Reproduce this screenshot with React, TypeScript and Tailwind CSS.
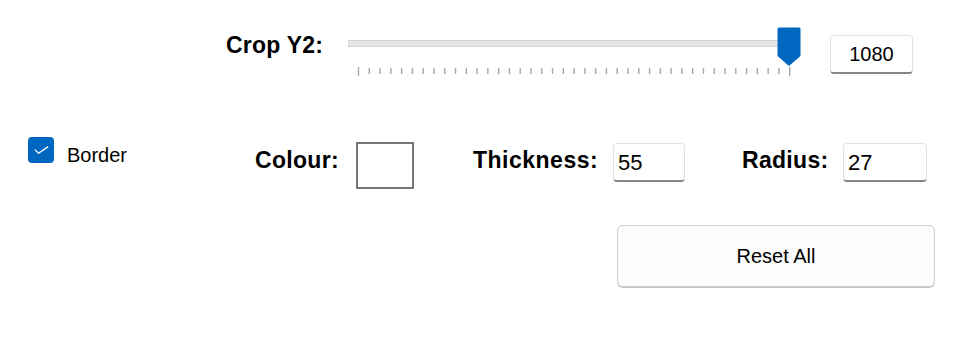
import React from 'react';

const ticks = Array.from({ length: 41 }, (_, i) => i);

function TextBox({ value, width, align }: { value: string; width: string; align: 'left' | 'center' }) {
  return (
    <div
      className={`${width} h-[39px] bg-white border border-[#e2e2e2] border-b-2 border-b-[#868686] rounded-[4px] flex items-center ${
        align === 'center' ? 'justify-center text-[20px]' : 'justify-start pl-[4px] text-[22px]'
      } text-black`}
    >
      {value}
    </div>
  );
}

function Slider() {
  return (
    <div className="relative w-[482px] h-[50px]">
      {/* track */}
      <div className="absolute left-0 top-[13px] w-[446px] h-[7px] bg-[#e6e6e6] border border-[#d4d4d4]" />
      {/* ticks */}
      <svg className="absolute left-0 top-[39px]" width="450" height="12">
        {ticks.map((i) => {
          const x = 10.5 + i * 10.78;
          const tall = i === 0 || i === 40;
          return (
            <line
              key={i}
              x1={x}
              x2={x}
              y1={tall ? 1 : 2}
              y2={tall ? 10 : 8}
              stroke="#a6a6a6"
              strokeWidth="1.4"
            />
          );
        })}
      </svg>
      {/* thumb */}
      <svg className="absolute left-[429px] top-0" width="24" height="40">
        <path d="M2 0.5 H22 Q23.5 0.5 23.5 2 V29 L12 39 L0.5 29 V2 Q0.5 0.5 2 0.5 Z" fill="#0067c0" />
      </svg>
    </div>
  );
}

export default function App() {
  return (
    <div className="w-[956px] h-[350px] bg-white text-black font-['Liberation_Sans',Arial,sans-serif] overflow-hidden">
      {/* crop slider row */}
      <div className="flex items-start pt-[27px] h-[77px]">
        <div className="ml-[226px] w-[122px] mt-[7px] text-[23px] leading-[23px] font-bold tracking-[0.2px]">Crop Y2:</div>
        <Slider />
        <div className="mt-[8px]">
          <TextBox value="1080" width="w-[83px]" align="center" />
        </div>
      </div>

      {/* border row */}
      <div className="flex items-start mt-[60px]">
        <div className="ml-[28px] w-[227px] flex items-start">
          <div className="w-[26px] h-[26px] rounded-[4px] bg-[#0067c0] flex items-center justify-center">
            <svg width="15" height="8" viewBox="0 0 15 8">
              <path d="M0.8 3.6 L4.6 7.2 L14.2 0.6" fill="none" stroke="#ffffff" strokeWidth="1.3" />
            </svg>
          </div>
          <span className="ml-[13px] mt-[8px] text-[20px] leading-[20px]">Border</span>
        </div>
        <div className="w-[101px] mt-[12px] text-[23px] leading-[23px] font-bold tracking-[0.3px]">Colour:</div>
        <div className="mt-[5px] w-[58px] h-[47px] bg-white border-2 border-[#767676]" />
        <div className="ml-[59px] w-[140px] mt-[12px] text-[23px] leading-[23px] font-bold tracking-[0.5px]">Thickness:</div>
        <div className="mt-[6px]">
          <TextBox value="55" width="w-[72px]" align="left" />
        </div>
        <div className="ml-[57px] w-[101px] mt-[12px] text-[23px] leading-[23px] font-bold tracking-[0.3px]">Radius:</div>
        <div className="mt-[6px]">
          <TextBox value="27" width="w-[84px]" align="left" />
        </div>
      </div>

      {/* reset */}
      <div className="flex mt-[36px]">
        <button className="ml-[617px] w-[318px] h-[62px] bg-[#fdfdfd] border border-[#cfcfcf] rounded-[6px] text-[20px] text-black shadow-[0_1px_0_#c4c4c4]">
          Reset All
        </button>
      </div>
    </div>
  );
}
